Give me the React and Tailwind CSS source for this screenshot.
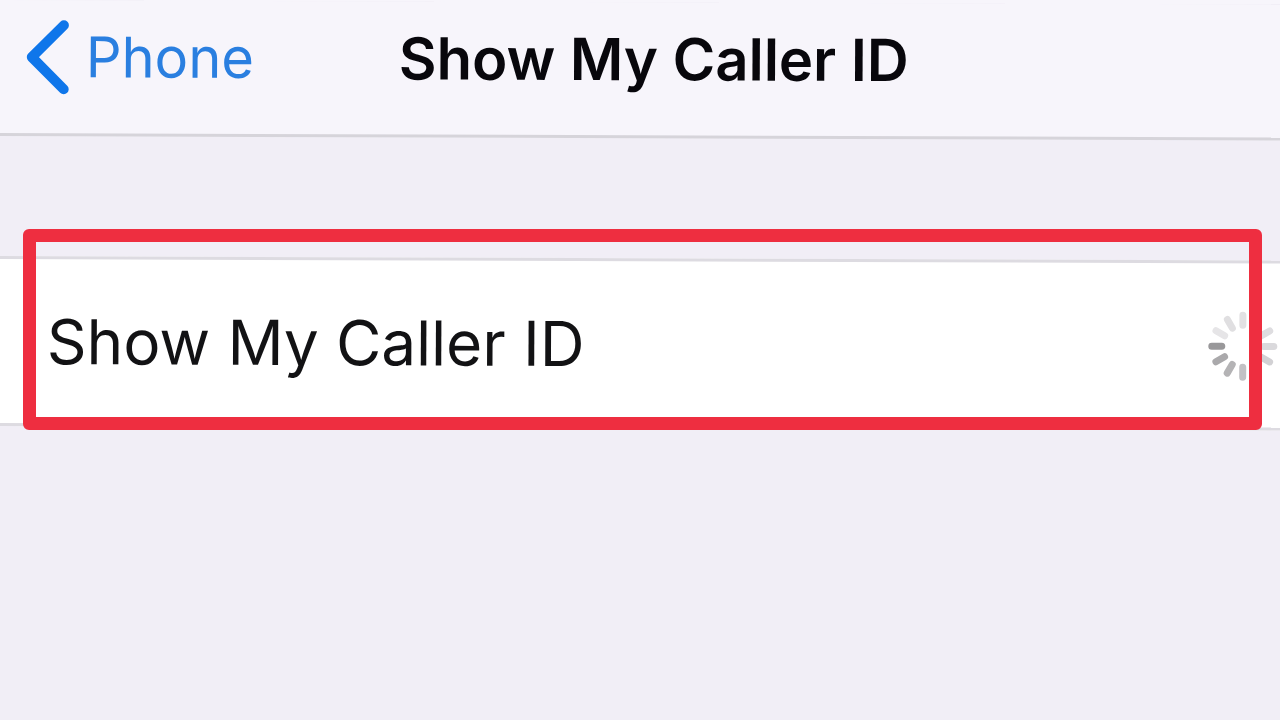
import React from 'react';

const SPOKES = [
  { angle: 0, color: '#e2e1e3' },
  { angle: 30, color: '#e2e1e3' },
  { angle: 60, color: '#dedde0' },
  { angle: 90, color: '#dad9dc' },
  { angle: 120, color: '#d2d1d4' },
  { angle: 150, color: '#cccbcd' },
  { angle: 180, color: '#c2c1c4' },
  { angle: 210, color: '#b4b3b5' },
  { angle: 240, color: '#aaa9ab' },
  { angle: 270, color: '#99989a' },
  { angle: 300, color: '#e6e5e7' },
  { angle: 330, color: '#e0dfe1' },
];

const Spinner = () => (
  <svg className="h-[72px] w-[72px] shrink-0" viewBox="0 0 72 72" role="img" aria-label="Loading">
    {SPOKES.map(({ angle, color }) => (
      <line
        key={angle}
        x1="36"
        y1="5"
        x2="36"
        y2="15"
        stroke={color}
        strokeWidth="7"
        strokeLinecap="round"
        transform={`rotate(${angle} 36 36)`}
      />
    ))}
  </svg>
);

const Header = () => (
  <header className="grid h-[136px] grid-cols-[1fr_auto_1fr] items-center border-b-3 border-[#d6d4da] bg-[#f7f5fb] px-6 pb-5">
    <a href="#phone" className="flex items-center gap-4 text-[#2a7fe0]">
      <svg className="h-[76px] w-[46px] shrink-0" viewBox="0 0 46 76" fill="none" aria-hidden="true">
        <path d="M40 6 L8 38 L40 70" stroke="#0f76ea" strokeWidth="10" strokeLinecap="round" strokeLinejoin="round" />
      </svg>
      <span className="text-[56px] leading-none">Phone</span>
    </a>
    <h1 className="text-[58px] leading-none font-semibold text-[#08070c]">Show My Caller ID</h1>
  </header>
);

const App = () => (
  <div className="relative min-h-screen overflow-hidden bg-[#f1eef6] font-['Inter','Liberation_Sans',sans-serif]">
    {/* the phone screen is tilted a little and runs past the right edge */}
    <div className="-mr-7 origin-top-left rotate-[0.2deg] shadow-[0_-8px_0_#f7f5fb]">
      <Header />
      <main className="pt-[120px]">
        <div className="flex h-[170px] items-center justify-between border-y-3 border-[#dddbe1] bg-white pt-0.5 pr-7 pl-12">
          <span className="text-[62px] leading-none text-[#121214]">Show My Caller ID</span>
          <Spinner />
        </div>
      </main>
    </div>

    {/* highlight frame */}
    <div className="pointer-events-none absolute top-[229px] right-[18px] left-[23px] h-[201px] rounded-md border-13 border-[#ee2e40]"></div>
  </div>
);

export default App;
